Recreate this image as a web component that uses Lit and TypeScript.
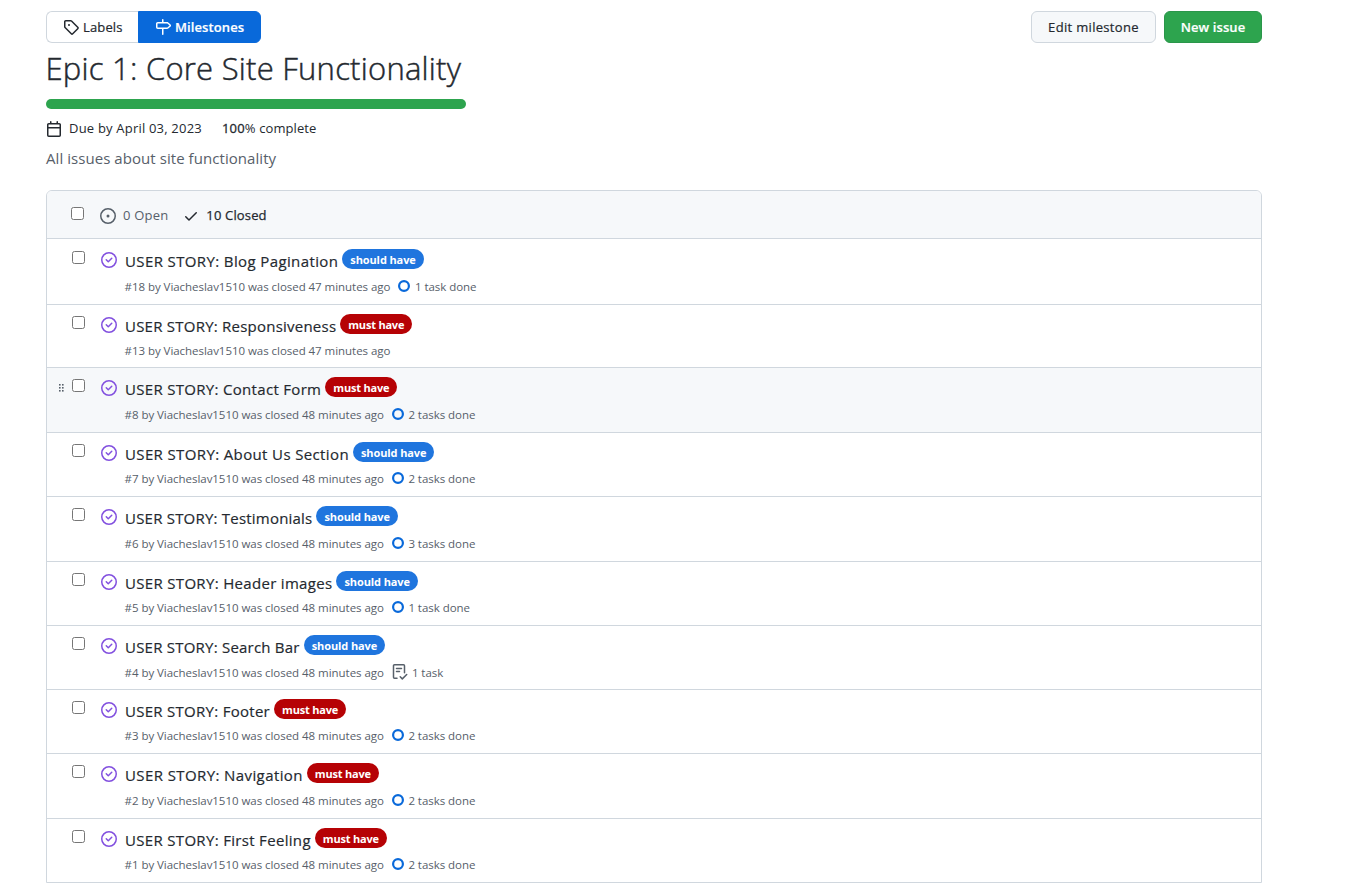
import { LitElement, html, css, svg } from "lit";
import { customElement } from "lit/decorators.js";
import { classMap } from "lit/directives/class-map.js";
import { styleMap } from "lit/directives/style-map.js";

const paths = {
  tag: "M1 7.775V2.75C1 1.784 1.784 1 2.75 1h5.025c.464 0 .91.184 1.238.513l6.25 6.25a1.75 1.75 0 0 1 0 2.474l-5.026 5.026a1.75 1.75 0 0 1-2.474 0l-6.25-6.25A1.752 1.752 0 0 1 1 7.775Zm1.5 0c0 .066.026.13.073.177l6.25 6.25a.25.25 0 0 0 .354 0l5.025-5.025a.25.25 0 0 0 0-.354l-6.25-6.25a.25.25 0 0 0-.177-.073H2.75a.25.25 0 0 0-.25.25ZM6 5a1 1 0 1 1 0 2 1 1 0 0 1 0-2Z",
  milestone: "M7.75 0a.75.75 0 0 1 .75.75V3h3.634c.414 0 .814.147 1.13.414l2.07 1.75a1.75 1.75 0 0 1 0 2.672l-2.07 1.75a1.75 1.75 0 0 1-1.13.414H8.5v5.25a.75.75 0 0 1-1.5 0V10H2.75A1.75 1.75 0 0 1 1 8.25v-3.5C1 3.784 1.784 3 2.75 3H7V.75A.75.75 0 0 1 7.75 0Zm4.384 8.5a.25.25 0 0 0 .161-.06l2.07-1.75a.248.248 0 0 0 0-.38l-2.07-1.75a.25.25 0 0 0-.161-.06H2.75a.25.25 0 0 0-.25.25v3.5c0 .138.112.25.25.25h9.384Z",
  calendar: "M4.75 0a.75.75 0 0 1 .75.75V2h5V.75a.75.75 0 0 1 1.5 0V2h1.25c.966 0 1.75.784 1.75 1.75v10.5A1.75 1.75 0 0 1 13.25 16H2.75A1.75 1.75 0 0 1 1 14.25V3.75C1 2.784 1.784 2 2.75 2H4V.75A.75.75 0 0 1 4.75 0ZM2.5 7.5v6.75c0 .138.112.25.25.25h10.5a.25.25 0 0 0 .25-.25V7.5Zm10.75-4H2.75a.25.25 0 0 0-.25.25V6h11V3.75a.25.25 0 0 0-.25-.25Z",
  opened: "M8 9.5a1.5 1.5 0 1 0 0-3 1.5 1.5 0 0 0 0 3ZM8 0a8 8 0 1 1 0 16A8 8 0 0 1 8 0ZM1.5 8a6.5 6.5 0 1 0 13 0 6.5 6.5 0 0 0-13 0Z",
  check: "M13.78 4.22a.75.75 0 0 1 0 1.06l-7.25 7.25a.75.75 0 0 1-1.06 0L2.22 9.28a.751.751 0 0 1 .018-1.042.751.751 0 0 1 1.042-.018L6 10.94l6.72-6.72a.75.75 0 0 1 1.06 0Z",
  closed: "M11.28 6.78a.75.75 0 0 0-1.06-1.06L7.25 8.69 5.78 7.22a.75.75 0 0 0-1.06 1.06l2 2a.75.75 0 0 0 1.06 0l3.5-3.5ZM16 8A8 8 0 1 1 0 8a8 8 0 0 1 16 0Zm-1.5 0a6.5 6.5 0 1 0-13 0 6.5 6.5 0 0 0 13 0Z",
};

const icon = (name: keyof typeof paths) =>
  html`<svg class="icon ${name}" width="16" height="16" viewBox="0 0 16 16" fill="currentColor">${svg`<path fill-rule="evenodd" d=${paths[name]}></path>`}</svg>`;

const ring = html`<svg class="ring" width="12" height="12" viewBox="0 0 12 12" fill="none">
  <circle cx="6" cy="6" r="4.9" stroke="#0969da" stroke-width="2.2"></circle></svg>`;

const taskNote = html`<svg class="note" width="16" height="16" viewBox="0 0 16 16" fill="none" stroke="currentColor" stroke-width="1.5" stroke-linecap="round" stroke-linejoin="round">
  <path d="M5 14.2H2.5a1 1 0 0 1-1-1V1.8a1 1 0 0 1 1-1h9a1 1 0 0 1 1 1v7M4.5 4.5h5M4.5 7.5h3M8.2 12.8l2.1 2.1 4.4-4.4"></path></svg>`;

interface Issue {
  id: number;
  title: string;
  tracking: number;
  must: boolean;
  mins: number;
  tasks?: string;
  pending?: boolean;
  hover?: boolean;
}

const issues: Issue[] = [
  { id: 18, title: "Blog Pagination", tracking: 0.38, must: false, mins: 47, tasks: "1 task done" },
  { id: 13, title: "Responsiveness", tracking: 0.23, must: true, mins: 47 },
  { id: 8, title: "Contact Form", tracking: 0.31, must: true, mins: 48, tasks: "2 tasks done", hover: true },
  { id: 7, title: "About Us Section", tracking: 0.37, must: false, mins: 48, tasks: "2 tasks done" },
  { id: 6, title: "Testimonials", tracking: 0.21, must: false, mins: 48, tasks: "3 tasks done" },
  { id: 5, title: "Header images", tracking: 0.32, must: false, mins: 48, tasks: "1 task done" },
  { id: 4, title: "Search Bar", tracking: 0.22, must: false, mins: 48, tasks: "1 task", pending: true },
  { id: 3, title: "Footer", tracking: 0.28, must: true, mins: 48, tasks: "2 tasks done" },
  { id: 2, title: "Navigation", tracking: 0.4, must: true, mins: 48, tasks: "2 tasks done" },
  { id: 1, title: "First Feeling", tracking: 0.32, must: true, mins: 48, tasks: "2 tasks done" },
];

@customElement("app-root")
export class AppRoot extends LitElement {
  static styles = css`
    :host { display: block; box-sizing: border-box; height: 891px; overflow: hidden; padding: 11px 106px 0 46px; background: #fff; color: #24292f; font-family: "Segoe UI", "Open Sans", "Noto Sans", sans-serif; font-size: 13px; }
    * { box-sizing: border-box; }
    .icon, .ring, .note { display: block; flex: none; }
    .bar { display: flex; justify-content: space-between; height: 32px; }
    .tabs, .actions { display: flex; }
    .actions { gap: 8px; }
    .tab, .btn { display: flex; align-items: center; height: 32px; border: 1px solid #d0d7de; white-space: nowrap; }
    .tab { padding-left: 16px; gap: 4px; }
    .labels { width: 92px; border-right: 0; border-radius: 6px 0 0 6px; letter-spacing: 0.15px; -webkit-text-stroke: 0.2px; }
    .miles { width: 123px; background: #0969da; border-color: #0969da; border-radius: 0 6px 6px 0; color: #fff; font-weight: 600; letter-spacing: 0.1px; -webkit-text-stroke: 0.2px; }
    .btn { justify-content: center; border-radius: 6px; }
    .edit { width: 125px; background: #f6f8fa; letter-spacing: 0.32px; -webkit-text-stroke: 0.2px; }
    .new { width: 98px; background: #2da44e; border-color: #2a964a; color: #fff; font-weight: 600; letter-spacing: 0.1px; -webkit-text-stroke: 0.2px; }
    h1 { margin: 1px 0 0 -0.5px; height: 48px; line-height: 48px; font-size: 31px; font-weight: 300; letter-spacing: 0.24px; -webkit-text-stroke: 0.45px; white-space: nowrap; }
    .progress { width: 420px; height: 10px; margin-top: 7px; border-radius: 6px; background: #2da44e; }
    .facts { display: flex; align-items: center; height: 20px; margin-top: 9px; white-space: nowrap; }
    .calendar { margin-top: 1px; }
    .due { margin: 0 20px 0 7px; letter-spacing: 0.2px; }
    .pct { letter-spacing: 0.1px; }
    .facts b { font-weight: 400; -webkit-text-stroke: 0.3px; letter-spacing: 0.2px; }
    .desc { height: 24px; line-height: 24px; margin-top: 8px; font-size: 15px; color: #57606a; letter-spacing: 0.06px; }
    .box { margin-top: 20px; border: 1px solid #d0d7de; border-radius: 6px 6px 0 0; overflow: hidden; }
    .head { display: flex; height: 48px; padding-left: 24px; background: #f6f8fa; border-bottom: 1px solid #d0d7de; color: #57606a; align-items: center; white-space: nowrap; }
    .check-box { flex: none; width: 13px; height: 13px; border: 1px solid #767676; border-radius: 2.5px; background: #fff; }
    .head .check-box { margin: 0 16px 2px 0; }
    .head .opened { margin-right: 7px; margin-top: 2px; }
    .open { letter-spacing: 0.2px; }
    .head .check { margin: 2px 7px 0 15px; color: #24292f; }
    .total { color: #24292f; letter-spacing: 0.15px; -webkit-text-stroke: 0.25px; }
    .rows { display: grid; grid-template-rows: 66px 63px 65px 64px 65px 64px 64px 64px 65px 63px; }
    .row { display: grid; grid-template-columns: 25px 29px 24px 1fr; padding-top: 11px; border-bottom: 1px solid #d0d7de; }
    .row:first-child { padding-top: 12px; }
    .row:last-child { border-bottom: 0; }
    .hover { background: #f6f8fa; }
    .grip { margin: 5px 0 0 11px; fill: #57606a; }
    .row .closed { color: #8250df; margin-top: 1px; }
    .body { display: flex; flex-direction: column; justify-content: space-between; padding-bottom: 9px; white-space: nowrap; }
    .row:nth-child(2) .body, .row:nth-child(7) .body { padding-bottom: 8px; }
    .line { display: flex; height: 22px; margin-top: -2px; }
    .title { font-size: 15px; line-height: 24px; height: 22px; -webkit-text-stroke: 0.18px; }
    .pill { height: 20px; line-height: 21px; margin-left: 4px; padding: 0 8px; border-radius: 10px; background: #1f75de; color: #fff; font-size: 11px; font-weight: 700; letter-spacing: -0.1px; }
    .must { background: #b60205; letter-spacing: -0.2px; }
    .meta { display: flex; align-items: center; height: 18px; margin-left: -0.5px; font-size: 11.5px; letter-spacing: -0.04px; color: #57606a; }
    .ring { margin: 0 4.5px 0 8px; }
    .note { margin: 0 4px 0 8px; }
  `;

  private row(i: Issue) {
    return html`<div class=${classMap({ row: true, hover: !!i.hover })}>
      <div>${i.hover
        ? html`<svg class="grip" width="7" height="10" viewBox="0 0 7 10">${[0, 3, 6].map(
            (y) => svg`<rect x="1" y=${y} width="1.6" height="1.6"></rect><rect x="4" y=${y} width="1.6" height="1.6"></rect>`
          )}</svg>`
        : null}</div>
      <div class="check-box"></div>
      ${icon("closed")}
      <div class="body">
        <div class="line"><span class="title" style=${styleMap({ letterSpacing: `${i.tracking}px` })}>USER STORY: ${i.title}</span><span class=${classMap({ pill: true, must: i.must })}>${i.must ? "must have" : "should have"}</span></div>
        <div class="meta"><span class="by">#${i.id} by Viacheslav1510 was closed ${i.mins} minutes ago</span>${i.tasks
          ? html`${i.pending ? taskNote : ring}<span class="tasks">${i.tasks}</span>`
          : null}</div>
      </div>
    </div>`;
  }

  render() {
    return html`
      <div class="bar">
        <div class="tabs">
          <div class="tab labels">${icon("tag")}<span>Labels</span></div>
          <div class="tab miles">${icon("milestone")}<span>Milestones</span></div>
        </div>
        <div class="actions">
          <div class="btn edit"><span>Edit milestone</span></div>
          <div class="btn new"><span>New issue</span></div>
        </div>
      </div>
      <h1><span>Epic 1: Core Site Functionality</span></h1>
      <div class="progress"></div>
      <div class="facts">${icon("calendar")}<span class="due">Due by April 03, 2023</span><span class="pct"><b>100</b>% complete</span></div>
      <div class="desc"><span>All issues about site functionality</span></div>
      <div class="box">
        <div class="head">
          <div class="check-box"></div>
          ${icon("opened")}<span class="open">0 Open</span>
          ${icon("check")}<span class="total">10 Closed</span>
        </div>
        <div class="rows">${issues.map((i) => this.row(i))}</div>
      </div>
    `;
  }
}
